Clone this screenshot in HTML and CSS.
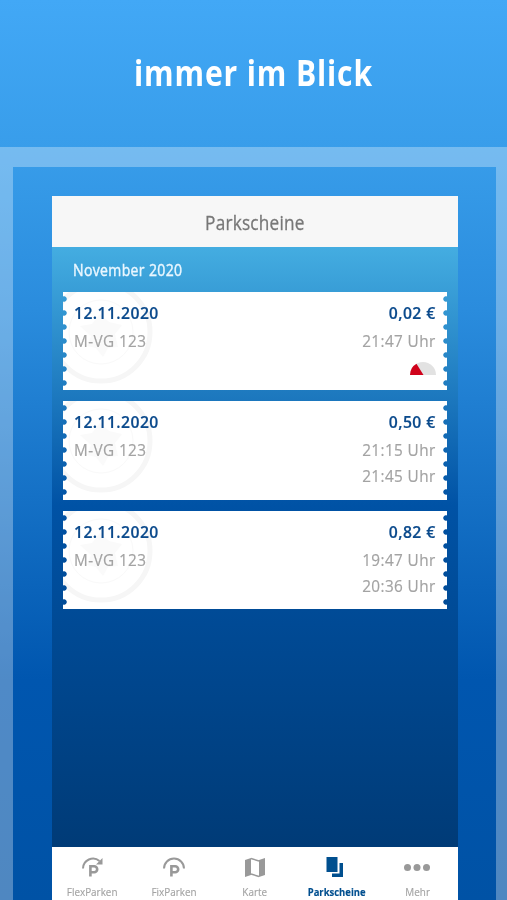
FILE: index.html
```html
<!DOCTYPE html>
<html lang="de">
<head>
<meta charset="utf-8">
<title>Parkscheine</title>
<link rel="stylesheet" href="styles.css">
</head>
<body>
<svg class="defs" aria-hidden="true">
  <symbol id="seal" viewBox="0 0 102 98">
    <g fill="none" stroke="#f6f6f6">
      <circle cx="38" cy="40" r="49" stroke-width="5"/>
      <circle cx="38" cy="40" r="32" stroke-width="1" stroke="#f9f9f9"/>
    </g>
    <path fill="#fafafa" d="M17 34l12-2 8-10 9 8 13 3-7 9 3 13-10 1-5 9-7-9-9-2 4-10z"/>
  </symbol>
</svg>
<main class="page">
  <h1 class="headline">immer im Blick</h1>
  <section class="frame">
    <div class="phone">
      <header class="title"><span>Parkscheine</span></header>
      <div class="content">
        <h2 class="month">November 2020</h2>
        <div class="tickets">
          <article class="ticket">
            <svg class="seal"><use href="#seal"/></svg>
            <div class="info"><span class="strong">12.11.2020</span><span>M-VG 123</span></div>
            <div class="info end"><span class="strong">0,02 €</span><span>21:47 Uhr</span>
              <svg class="gauge" viewBox="0 0 26 13"><path fill="#e2e2e2" d="M0 13a13 13 0 0 1 26 0z"/><path fill="#d0021b" d="M0 13A13 13 0 0 1 6.500 1.700l7 11.300z"/></svg>
            </div>
          </article>
          <article class="ticket">
            <svg class="seal"><use href="#seal"/></svg>
            <div class="info"><span class="strong">12.11.2020</span><span>M-VG 123</span></div>
            <div class="info end"><span class="strong">0,50 €</span><span>21:15 Uhr</span><span>21:45 Uhr</span></div>
          </article>
          <article class="ticket">
            <svg class="seal"><use href="#seal"/></svg>
            <div class="info"><span class="strong">12.11.2020</span><span>M-VG 123</span></div>
            <div class="info end"><span class="strong">0,82 €</span><span>19:47 Uhr</span><span>20:36 Uhr</span></div>
          </article>
        </div>
      </div>
      <nav class="tabs">
        <a class="tab"><svg class="icon" viewBox="0 0 28 24"><g fill="none" stroke="#999"><path stroke-width="2" d="M4 13.500A10 10 0 0 1 20.500 6"/><path stroke-width="2.600" d="M11.400 21.500V11.300h3.800a3 3 0 0 1 0 6h-3.800"/></g><path fill="#999" d="M23.500 3v6.500H17z"/></svg><span>FlexParken</span></a>
        <a class="tab"><svg class="icon" viewBox="0 0 28 24"><g fill="none" stroke="#999"><path stroke-width="2" d="M4 13.500a10 10 0 0 1 20 0"/><path stroke-width="2.600" d="M11.400 21.500V11.300h3.800a3 3 0 0 1 0 6h-3.800"/></g></svg><span>FixParken</span></a>
        <a class="tab"><svg class="icon" viewBox="0 0 28 24"><path fill="#999" d="M4 5l6-2v17l-6 2zM18 5l6-2v17l-6 2z"/><path fill="none" stroke="#999" stroke-width="1.400" d="M10 3.500l8 2.500M10 19l8 2.500"/></svg><span>Karte</span></a>
        <a class="tab active"><svg class="icon" viewBox="0 0 28 24"><path fill="#004f8f" d="M4.500 2h11v15h-11zM17.500 8H21v14H10v-3.500h7.500z"/></svg><span>Parkscheine</span></a>
        <a class="tab"><svg class="icon" viewBox="0 0 28 24"><g fill="#999"><circle cx="4.500" cy="12.500" r="3.500"/><circle cx="14" cy="12.500" r="3.500"/><circle cx="23.500" cy="12.500" r="3.500"/></g></svg><span>Mehr</span></a>
      </nav>
    </div>
  </section>
</main>
</body>
</html>
```
FILE: styles.css
```css
* { box-sizing: border-box; }
body { margin: 0; font-family: "Open Sans", "Noto Sans", sans-serif; }
.defs { display: none; }
.page {
  width: 507px; height: 900px; overflow: hidden;
  display: flex; flex-direction: column;
  background: linear-gradient(#42a8f6 0, #389dea 150px, #2a8cdd 310px, #0056af 680px, #0052a5 900px);
}
.headline { margin: 0; height: 147px; line-height: 145px; text-align: center; color: #fff; font-size: 35px; font-weight: 700; letter-spacing: 1px; transform: scaleX(.86); }
.frame {
  flex: 1; min-height: 0; padding: 29px 38px 0 39px; display: flex;
  border: solid rgba(255,255,255,.31); border-width: 20px 11px 0 13px;
}
.phone { flex: 1; display: flex; flex-direction: column; }
.title { height: 51px; line-height: 54px; text-align: center; background: #f7f7f7; color: #777; font-size: 20px; letter-spacing: .25px; -webkit-text-stroke: .3px; }
.title span { display: inline-block; transform: scaleX(.86); }
.content { flex: 1; background: linear-gradient(#44ade1, #0052a5 43%, #003b77); }
.month {
  width: max-content; height: 45px; margin: 0 0 0 21px; line-height: 46px;
  color: #eaf7ff; font-size: 15.500px; font-weight: 400; letter-spacing: .4px;
  -webkit-text-stroke: .4px; transform: scaleX(.905); transform-origin: left;
}
.tickets { display: flex; flex-direction: column; gap: 11px; padding: 0 11px; }
.ticket {
  position: relative; height: 98.400px; padding: 8px 11px 0; display: flex; justify-content: space-between;
  background: #fff;
  mask: radial-gradient(circle at 1px 7px, transparent 2.300px, #000 3.100px) 0 0 / 50% 14px repeat-y,
        radial-gradient(circle at calc(100% - 1px) 7px, transparent 2.300px, #000 3.100px) 100% 0 / 50% 14px repeat-y;
}
.seal { position: absolute; left: 0; top: 0; width: 102px; height: 98px; }
.info { position: relative; display: flex; flex-direction: column; align-items: flex-start; color: #a3a3a3; font-size: 17px; line-height: 26px; letter-spacing: .45px; -webkit-text-stroke: .2px; }
.info span { transform: scaleX(.9); transform-origin: left; }
.info .strong { color: #0b4a8c; font-weight: 600; margin-bottom: 2px; transform: scaleX(.925); }
.info.end { align-items: flex-end; }
.info.end span { transform-origin: right; }
.gauge { width: 26px; height: 13px; margin-top: 8px; }
.tabs { height: 53px; display: grid; grid-template-columns: repeat(5, 1fr); background: #fff; }
.tab { display: flex; flex-direction: column; align-items: center; padding-top: 8px; color: #a3a3a3; font-size: 11px; line-height: 18px; white-space: nowrap; }
.tab span { transform: scaleX(.9); -webkit-text-stroke: .15px; }
.icon { width: 28px; height: 24px; margin-bottom: 4px; }
.active { color: #004f8f; font-weight: 700; }
.tab.active span { transform: scaleX(.86); }
```
